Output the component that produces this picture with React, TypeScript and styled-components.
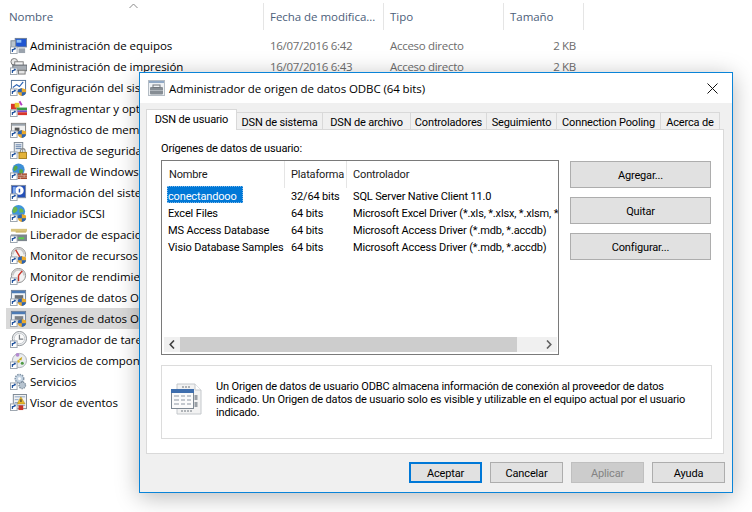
import React from "react";
import styled, { createGlobalStyle } from "styled-components";

const Global = createGlobalStyle`
  html, body { margin: 0; padding: 0; background: #fff; }
  body {
    width: 752px;
    height: 512px;
    overflow: hidden;
    font-family: "Open Sans", "Liberation Sans", sans-serif;
    font-size: 11.5px;
    color: #000;
  }
`;

const Page = styled.div`
  position: relative;
  width: 752px;
  height: 512px;
  overflow: hidden;
`;

/* ---------- explorer behind the dialog ---------- */
const HeaderRow = styled.div`
  position: relative;
  display: grid;
  grid-template-columns: 264px 120px 120px 80px;
  height: 35px;
  padding-top: 3px;
  box-sizing: border-box;
`;

const HeaderCell = styled.div<{ $pad: number }>`
  height: 27px;
  line-height: 27px;
  padding-left: ${(p) => p.$pad}px;
  border-right: 1px solid #e5e5e5;
  color: #4c607a;
  letter-spacing: -0.04px;
  white-space: nowrap;
`;

const SortArrow = styled.svg`
  position: absolute;
  left: 129px;
  top: 3px;
`;

const FileRow = styled.div`
  display: grid;
  grid-template-columns: 258px 120px 120px 72px;
  height: 21px;
  line-height: 21px;
  margin-left: 6px;
  white-space: nowrap;
`;

const NameCell = styled.div<{ $selected?: boolean }>`
  display: flex;
  align-items: center;
  gap: 3px;
  padding-left: 4px;
  background: ${(p) => (p.$selected ? "#d9d9d9" : "transparent")};
  letter-spacing: -0.04px;
`;

const InfoCell = styled.div<{ $right?: boolean }>`
  padding-left: 6px;
  color: #6d6d6d;
  letter-spacing: -0.3px;
  text-align: ${(p) => (p.$right ? "right" : "left")};
`;

/* ---------- dialog ---------- */
const Dialog = styled.div`
  position: absolute;
  left: 139px;
  top: 72px;
  width: 594px;
  height: 421px;
  box-sizing: border-box;
  border: 1px solid #0a84d8;
  background: #f0f0f0;
  box-shadow: 0 4px 22px rgba(0, 0, 0, 0.28);
  font-family: Roboto, "Liberation Sans", sans-serif;
  font-size: 11px;
  letter-spacing: -0.15px;
`;

const TitleBar = styled.div`
  display: flex;
  align-items: center;
  height: 30px;
  padding: 0 14px 0 8px;
  background: #fff;
`;

const TitleText = styled.div`
  flex: 1;
  margin-left: 3px;
  font-family: "Open Sans", "Liberation Sans", sans-serif;
  font-size: 11.5px;
  letter-spacing: -0.1px;
`;

const TabArea = styled.div`
  margin: 7px 8px 0 6px;
`;

const TabStrip = styled.div`
  display: flex;
  align-items: flex-end;
  height: 20px;
  margin-bottom: -1px;
  position: relative;
`;

const Tab = styled.div<{ $active?: boolean; $width: number }>`
  width: ${(p) => p.$width}px;
  height: ${(p) => (p.$active ? 21 : 18)}px;
  line-height: ${(p) => (p.$active ? 20 : 19)}px;
  box-sizing: border-box;
  border: 1px solid #d9d9d9;
  border-left-width: ${(p) => (p.$active ? 1 : 0)}px;
  border-bottom: ${(p) => (p.$active ? "none" : "1px solid #d9d9d9")};
  background: ${(p) => (p.$active ? "#fff" : "#f0f0f0")};
  text-align: center;
  white-space: nowrap;
  overflow: hidden;
  position: relative;
  z-index: ${(p) => (p.$active ? 1 : 0)};
`;

const TabPanel = styled.div`
  height: 325px;
  box-sizing: border-box;
  padding: 9px 11px 0 14px;
  background: #fff;
  border: 1px solid #d9d9d9;
`;

const PanelLabel = styled.div`
  height: 21px;
  line-height: 20px;
`;

const ContentRow = styled.div`
  display: flex;
  gap: 11px;
`;

const ListBox = styled.div`
  display: flex;
  flex-direction: column;
  width: 398px;
  height: 195px;
  box-sizing: border-box;
  border: 1px solid #7a7a7a;
  overflow: hidden;
`;

const ListHeader = styled.div`
  display: grid;
  grid-template-columns: 123px 62px 1fr;
  flex: none;
  height: 25px;
  line-height: 27px;
  color: #1a1a1a;
`;

const ListHeaderCell = styled.div<{ $pad: number; $last?: boolean }>`
  padding-left: ${(p) => p.$pad}px;
  border-right: ${(p) => (p.$last ? "none" : "1px solid #e5e5e5")};
  white-space: nowrap;
`;

const ListRows = styled.div`
  flex: 1;
  overflow: hidden;
`;

const ListRow = styled.div`
  display: grid;
  grid-template-columns: 123px 62px 1fr;
  grid-template-rows: 17px;
  height: 17px;
  line-height: 21px;
  white-space: nowrap;
`;

const ListCell = styled.div`
  padding-left: 6px;
  overflow: hidden;
`;

const ListName = styled.div<{ $selected?: boolean }>`
  margin-left: 5px;
  padding-left: 1px;
  width: ${(p) => (p.$selected ? "76px" : "auto")};
  box-sizing: border-box;
  background: ${(p) => (p.$selected ? "#0078d7" : "transparent")};
  color: ${(p) => (p.$selected ? "#fff" : "#000")};
  outline: ${(p) => (p.$selected ? "1px dotted #7fb8e8" : "none")};
  outline-offset: -1px;
  overflow: hidden;
`;

const HScroll = styled.div`
  display: flex;
  flex: none;
  height: 15px;
  margin: 0 1px 2px 2px;
  background: #f0f0f0;
`;

const ScrollArrow = styled.div`
  display: flex;
  align-items: center;
  justify-content: center;
  width: 16px;
  flex: none;
`;

const ScrollThumb = styled.div`
  width: 337px;
  background: #cdcdcd;
`;

const ScrollGap = styled.div`
  flex: 1;
`;

const SideButtons = styled.div`
  display: flex;
  flex-direction: column;
  gap: 9px;
  width: 141px;
  padding-top: 1px;
`;

const Button = styled.div<{ $height: number; $width: number; $primary?: boolean; $disabled?: boolean }>`
  display: flex;
  align-items: center;
  justify-content: center;
  width: ${(p) => p.$width}px;
  height: ${(p) => p.$height}px;
  box-sizing: border-box;
  padding-top: 2px;
  background: ${(p) => (p.$disabled ? "#cccccc" : "#e1e1e1")};
  border: ${(p) =>
    p.$primary ? "2px solid #0078d7" : p.$disabled ? "1px solid #bfbfbf" : "1px solid #adadad"};
  color: ${(p) => (p.$disabled ? "#838383" : "#000")};
`;

const InfoBox = styled.div`
  display: flex;
  width: 551px;
  height: 74px;
  margin-top: 10px;
  box-sizing: border-box;
  border: 1px solid #dcdcdc;
`;

const InfoIcon = styled.svg`
  flex: none;
  margin: 17px 13px 0 9px;
`;

const InfoText = styled.div`
  padding-top: 14px;
  line-height: 13px;
  white-space: nowrap;
`;

const Footer = styled.div`
  display: flex;
  justify-content: flex-end;
  gap: 8px;
  padding: 8px 7px 0 0;
`;

/* ---------- icons ---------- */
const Shortcut = () => (
  <g>
    <rect x="0.5" y="10.5" width="7" height="7" fill="#fff" stroke="#9aa3ad" />
    <path d="M2.5 16V13.2H5M3 13.8L5.5 11.8" fill="none" stroke="#1c4f9c" strokeWidth="1.2" />
    <path d="M4 11.5H6V13.5Z" fill="#1c4f9c" />
  </g>
);

const Shield = () => (
  <g>
    <path d="M12.5 9.5L17 11V14.5C17 16 15 17.5 12.5 18C10 17.5 8.5 16 8.5 14.5V11Z" fill="#e9a92c" />
    <path d="M12.5 9.5V14H8.5V11ZM12.5 14H17C17 16 15 17.5 12.5 18Z" fill="#2a63b5" />
  </g>
);

const gauge = (needle: string, badge: React.ReactNode) => (
  <g>
    <circle cx="9" cy="8" r="7.5" fill="#f3f3f3" stroke="#8a8a8a" />
    <path d="M3 8A6 6 0 0 1 15 8" fill="none" stroke="#c9c9c9" strokeWidth="2" />
    <path d={needle} stroke="#c8352a" strokeWidth="1.5" fill="none" />
    {badge}
  </g>
);

const drawings: Record<string, React.ReactNode> = {
  equipos: (
    <g>
      <rect x="5.5" y="1.5" width="12" height="9" fill="#1f55d0" stroke="#6f7f96" />
      <rect x="7" y="3" width="5" height="3" fill="#8fc1f5" />
      <rect x="1" y="4" width="5" height="7" fill="#b9c3cc" stroke="#7a8693" />
      <rect x="9" y="12" width="7" height="5" fill="#9aa3ad" />
    </g>
  ),
  impresion: (
    <g>
      <circle cx="4.5" cy="4" r="3.5" fill="#e8e8e8" stroke="#777" />
      <rect x="5" y="4" width="9" height="4" fill="#f4f4f4" stroke="#7d7d7d" />
      <rect x="3" y="7.5" width="15" height="6" fill="#a7adb4" stroke="#5f656c" />
      <rect x="9" y="13" width="7" height="4" fill="#e5e5e5" stroke="#777" />
    </g>
  ),
  config: (
    <g>
      <rect x="1.5" y="1.5" width="15" height="12" fill="#fff" stroke="#4d6f96" />
      <path d="M3 9L7 6L10 8L14 3" fill="none" stroke="#2a63b5" strokeWidth="1.2" />
      <Shield />
    </g>
  ),
  desfrag: (
    <g>
      <rect x="1" y="4" width="6" height="6" fill="#d8352a" />
      <rect x="5" y="3" width="5" height="5" fill="#e8c52e" />
      <rect x="10" y="1" width="2" height="5" fill="#b53bc0" transform="rotate(-30 11 3)" />
      <rect x="7" y="8" width="11" height="3" fill="#3a9c46" />
      <rect x="7" y="11" width="11" height="2" fill="#7a4bc4" />
      <rect x="8" y="13" width="10" height="3" fill="#d8352a" />
    </g>
  ),
  diagnostico: (
    <g>
      <rect x="1.5" y="2.5" width="15" height="11" fill="#f0f0f0" stroke="#7d7d7d" />
      <rect x="2" y="3" width="14" height="2" fill="#9aa3ad" />
      <rect x="5" y="7" width="5" height="4" fill="#555" />
      <Shield />
    </g>
  ),
  directiva: (
    <g>
      <rect x="4.5" y="0.5" width="9" height="11" fill="#e9edf1" stroke="#7c8794" />
      <path d="M6 3H12M6 5H12M6 7H12" stroke="#5a7ca8" />
      <path d="M11 11V9.5A2.5 2.5 0 0 1 16 9.5V11" fill="none" stroke="#8b8b8b" strokeWidth="1.2" />
      <rect x="9.5" y="11" width="8" height="6.5" fill="#e3b23a" stroke="#a57e1d" />
    </g>
  ),
  firewall: (
    <g>
      <circle cx="9" cy="7" r="6.5" fill="#3d8fd6" />
      <path d="M5 3C8 2 9 5 7 7S4 9 3.5 6ZM10 7C13 6 15 8 13 11S9 11 10 7Z" fill="#58a845" />
      <rect x="8" y="11" width="10" height="6" fill="#a5482c" />
      <path d="M8 13H18M8 15H18M12 11V13M15 13V15M11 15V17" stroke="#e8d8c8" strokeWidth="0.6" />
    </g>
  ),
  informacion: (
    <g>
      <rect x="1.5" y="1.5" width="15" height="13" fill="#2450b8" stroke="#7d8aa0" />
      <circle cx="10" cy="7" r="4.5" fill="#fff" />
      <path d="M10 5V9" stroke="#2450b8" strokeWidth="1.6" />
      <rect x="3" y="3" width="3" height="8" fill="#7fa8ea" />
    </g>
  ),
  iscsi: (
    <g>
      <circle cx="9" cy="7" r="7" fill="#3f95da" />
      <path d="M4 2C8 1 9 5 7 7S3 9 2.5 6ZM10 4C13 3 15 6 14 8L10 8Z" fill="#6cb54c" />
      <Shield />
    </g>
  ),
  liberador: (
    <g>
      <rect x="1" y="3" width="17" height="3" fill="#d8c37a" />
      <path d="M6 5.5H17V7H6Z" fill="#c8b060" />
      <rect x="1" y="9" width="17" height="7" fill="#7c858d" />
      <rect x="9" y="12" width="6" height="2" fill="#58d048" />
    </g>
  ),
  recursos: gauge("M9 8L6 3M9 8L12 14", <Shield />),
  rendimiento: gauge("M9 8L13 3M9 8L9 14", null),
  odbc: (
    <g>
      <rect x="1.5" y="1.5" width="15" height="13" fill="#f2f4f6" stroke="#6f7f96" />
      <rect x="2" y="2" width="14" height="2.5" fill="#4d7bb5" />
      <rect x="5" y="6.5" width="9" height="4" fill="#6b7076" />
      <Shield />
    </g>
  ),
  odbcgrey: (
    <g>
      <rect x="1.5" y="1.5" width="15" height="13" fill="#eceff2" stroke="#6f7f96" />
      <rect x="2" y="2" width="14" height="2.5" fill="#4d7bb5" />
      <rect x="5" y="6.5" width="9" height="4" fill="#7d8288" />
      <Shield />
    </g>
  ),
  programador: (
    <g>
      <circle cx="10" cy="8" r="7.5" fill="#eef0f2" stroke="#8a8f94" />
      <circle cx="10" cy="8" r="5.5" fill="#fbfbfb" stroke="#c5c9cd" />
      <path d="M10 4V8.5H14" fill="none" stroke="#7a7f84" strokeWidth="1.3" />
    </g>
  ),
  componentes: (
    <g>
      <circle cx="10" cy="9" r="7.5" fill="#e9ecef" stroke="#a8aeb4" />
      <circle cx="8" cy="3" r="2" fill="#b48ad0" />
      <path d="M9 8L13 5L12 9Z" fill="#c9a516" />
      <circle cx="13" cy="12" r="1.6" fill="#4d9a42" />
      <circle cx="9" cy="10" r="1.4" fill="#d8b52a" />
    </g>
  ),
  servicios: (
    <g>
      <circle cx="10" cy="6" r="4.5" fill="#c4d3e2" stroke="#8496a8" strokeWidth="1.6" strokeDasharray="1.6 1" />
      <circle cx="13" cy="13" r="3.5" fill="#b7c4d0" stroke="#7b8b9a" strokeWidth="1.4" strokeDasharray="1.4 1" />
      <circle cx="10" cy="6" r="1.5" fill="#fff" />
    </g>
  ),
  eventos: (
    <g>
      <rect x="3.5" y="0.5" width="14" height="15" fill="#f2f2f2" stroke="#7b8794" />
      <path d="M5 3H16M5 6H9M5 9H9M5 12H16" stroke="#87a2c2" />
      <path d="M11.5 3L16 10.5H7.5Z" fill="#e9b92c" stroke="#a5801a" strokeWidth="0.5" />
      <rect x="11" y="5.5" width="1.2" height="3" fill="#333" />
      <rect x="9" y="12" width="5" height="5" fill="#c8352a" />
    </g>
  ),
};

const RowIconSvg = styled.svg`
  flex: none;
`;

const RowIcon = ({ kind }: { kind: string }) => (
  <RowIconSvg width="17" height="17" viewBox="0 0 18 18">
    {drawings[kind]}
    <Shortcut />
  </RowIconSvg>
);

const TitleIcon = () => (
  <svg width="18" height="18" viewBox="0 0 18 18">
    <rect x="0.5" y="1.5" width="16" height="15" fill="#eef1f4" stroke="#b4bcc4" />
    <rect x="1" y="2" width="15" height="2" fill="#8fa8c6" />
    <rect x="2" y="8" width="13" height="7.5" rx="1" fill="#868d94" />
    <rect x="5" y="6" width="7" height="2.5" fill="none" stroke="#70767c" />
    <rect x="2" y="11" width="13" height="1" fill="#b1b7bd" />
  </svg>
);

const files = [
  { name: "Administración de equipos", icon: "equipos", date: "16/07/2016 6:42" },
  { name: "Administración de impresión", icon: "impresion", date: "16/07/2016 6:43" },
  { name: "Configuración del sistema", icon: "config" },
  { name: "Desfragmentar y optimizar unidades", icon: "desfrag" },
  { name: "Diagnóstico de memoria de Windows", icon: "diagnostico" },
  { name: "Directiva de seguridad local", icon: "directiva" },
  { name: "Firewall de Windows con seguridad avanzada", icon: "firewall" },
  { name: "Información del sistema", icon: "informacion" },
  { name: "Iniciador iSCSI", icon: "iscsi" },
  { name: "Liberador de espacio en disco", icon: "liberador" },
  { name: "Monitor de recursos", icon: "recursos" },
  { name: "Monitor de rendimiento", icon: "rendimiento" },
  { name: "Orígenes de datos ODBC (32 bits)", icon: "odbc" },
  { name: "Orígenes de datos ODBC (64 bits)", icon: "odbcgrey", selected: true },
  { name: "Programador de tareas", icon: "programador" },
  { name: "Servicios de componentes", icon: "componentes" },
  { name: "Servicios", icon: "servicios" },
  { name: "Visor de eventos", icon: "eventos" },
];

const tabs = [
  { label: "DSN de usuario", width: 91, active: true },
  { label: "DSN de sistema", width: 86 },
  { label: "DSN de archivo", width: 88 },
  { label: "Controladores", width: 76 },
  { label: "Seguimiento", width: 70 },
  { label: "Connection Pooling", width: 104 },
  { label: "Acerca de", width: 59 },
];

const sources = [
  { name: "conectandooo", platform: "32/64 bits", driver: "SQL Server Native Client 11.0", selected: true },
  { name: "Excel Files", platform: "64 bits", driver: "Microsoft Excel Driver (*.xls, *.xlsx, *.xlsm, *.xlsb)" },
  { name: "MS Access Database", platform: "64 bits", driver: "Microsoft Access Driver (*.mdb, *.accdb)" },
  { name: "Visio Database Samples", platform: "64 bits", driver: "Microsoft Access Driver (*.mdb, *.accdb)" },
];

export default function App() {
  return (
    <Page>
      <Global />
      <HeaderRow>
        <HeaderCell $pad={9}>Nombre</HeaderCell>
        <HeaderCell $pad={6}>Fecha de modifica...</HeaderCell>
        <HeaderCell $pad={6}>Tipo</HeaderCell>
        <HeaderCell $pad={6}>Tamaño</HeaderCell>
        <SortArrow width="9" height="6" viewBox="0 0 9 6">
          <path d="M0.5 5L4.5 1L8.5 5" fill="none" stroke="#8a8a8a" />
        </SortArrow>
      </HeaderRow>
      {files.map((f) => (
        <FileRow key={f.name}>
          <NameCell $selected={f.selected}>
            <RowIcon kind={f.icon} />
            {f.name}
          </NameCell>
          {f.date && <InfoCell>{f.date}</InfoCell>}
          {f.date && <InfoCell>Acceso directo</InfoCell>}
          {f.date && <InfoCell $right>2 KB</InfoCell>}
        </FileRow>
      ))}

      <Dialog>
        <TitleBar>
          <TitleIcon />
          <TitleText>Administrador de origen de datos ODBC (64 bits)</TitleText>
          <svg width="11" height="11" viewBox="0 0 11 11">
            <path d="M0.5 0.5L10.5 10.5M10.5 0.5L0.5 10.5" stroke="#111" fill="none" />
          </svg>
        </TitleBar>
        <TabArea>
          <TabStrip>
            {tabs.map((t) => (
              <Tab key={t.label} $active={t.active} $width={t.width}>
                {t.label}
              </Tab>
            ))}
          </TabStrip>
          <TabPanel>
            <PanelLabel>Orígenes de datos de usuario:</PanelLabel>
            <ContentRow>
              <ListBox>
                <ListHeader>
                  <ListHeaderCell $pad={7}>Nombre</ListHeaderCell>
                  <ListHeaderCell $pad={6}>Plataforma</ListHeaderCell>
                  <ListHeaderCell $pad={6} $last>Controlador</ListHeaderCell>
                </ListHeader>
                <ListRows>
                  {sources.map((s) => (
                    <ListRow key={s.name}>
                      <ListName $selected={s.selected}>{s.name}</ListName>
                      <ListCell>{s.platform}</ListCell>
                      <ListCell>{s.driver}</ListCell>
                    </ListRow>
                  ))}
                </ListRows>
                <HScroll>
                  <ScrollArrow>
                    <svg width="6" height="9" viewBox="0 0 6 9">
                      <path d="M5 0.5L1.2 4.5L5 8.5" fill="none" stroke="#404040" strokeWidth="1.6" />
                    </svg>
                  </ScrollArrow>
                  <ScrollThumb />
                  <ScrollGap />
                  <ScrollArrow>
                    <svg width="6" height="9" viewBox="0 0 6 9">
                      <path d="M1 0.5L4.8 4.5L1 8.5" fill="none" stroke="#606060" strokeWidth="1.6" />
                    </svg>
                  </ScrollArrow>
                </HScroll>
              </ListBox>
              <SideButtons>
                <Button $width={141} $height={27}>Agregar...</Button>
                <Button $width={141} $height={27}>Quitar</Button>
                <Button $width={141} $height={27}>Configurar...</Button>
              </SideButtons>
            </ContentRow>
            <InfoBox>
              <InfoIcon width="32" height="32" viewBox="0 0 32 32">
                <path d="M6 1H24L30 7V31H6Z" fill="#f2f2f2" stroke="#c4c8cc" />
                <path d="M24 1V7H30" fill="#fff" stroke="#c4c8cc" />
                <path d="M11 4H20" stroke="#b0b4b8" strokeWidth="2" strokeDasharray="2 1" />
                <path d="M25 12V26" stroke="#9aa0a6" strokeWidth="3" strokeDasharray="5 2" />
                <path d="M10 28H22" stroke="#b0b4b8" strokeWidth="2" strokeDasharray="2 1" />
                <rect x="0.5" y="6.5" width="22" height="19" fill="#fbfbfb" stroke="#7d8792" />
                <rect x="0" y="6" width="23" height="4" fill="#3f6fae" />
                <path d="M3 13H8M10 13H14M16 13H20M3 17H8M10 17H14M16 17H20M3 21H8M10 21H14M16 21H20" stroke="#8d97a3" />
              </InfoIcon>
              <InfoText>
                Un Origen de datos de usuario ODBC almacena información de conexión al proveedor de datos
                <br />
                indicado. Un Origen de datos de usuario solo es visible y utilizable en el equipo actual por el usuario
                <br />
                indicado.
              </InfoText>
            </InfoBox>
          </TabPanel>
        </TabArea>
        <Footer>
          <Button $width={73} $height={21} $primary>Aceptar</Button>
          <Button $width={73} $height={21}>Cancelar</Button>
          <Button $width={73} $height={21} $disabled>Aplicar</Button>
          <Button $width={73} $height={21}>Ayuda</Button>
        </Footer>
      </Dialog>
    </Page>
  );
}
